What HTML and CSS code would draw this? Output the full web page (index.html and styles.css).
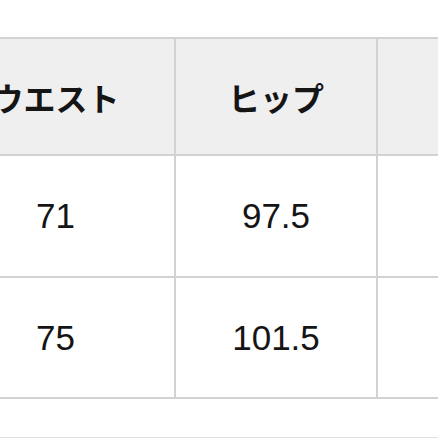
FILE: index.html
```html
<!DOCTYPE html>
<html lang="ja">
<head>
<meta charset="utf-8">
<title>サイズ表</title>
<link rel="stylesheet" href="styles.css">
</head>
<body>
<div class="page">
  <div class="size-table">
    <div class="cell head">ウエスト</div>
    <div class="cell head">ヒップ</div>
    <div class="cell head"></div>
    <div class="cell row1">71</div>
    <div class="cell row1">97.5</div>
    <div class="cell row1"></div>
    <div class="cell row2">75</div>
    <div class="cell row2">101.5</div>
    <div class="cell row2"></div>
  </div>
  <div class="next-rule"></div>
</div>
</body>
</html>
```
FILE: styles.css
```css
html, body {
  margin: 0;
  padding: 0;
  background: #ffffff;
}
.page {
  width: 438px;
  height: 438px;
  overflow: hidden;
  padding-top: 37px;
  box-sizing: border-box;
}
.size-table {
  display: grid;
  grid-template-columns: 239px 202px 240px;
  grid-template-rows: 117px 122px 121px;
  width: max-content;
  margin-left: -65px;
  border-top: 2px solid #d2d2d2;
  border-left: 2px solid #d2d2d2;
}
.cell {
  box-sizing: border-box;
  border-right: 2px solid #d2d2d2;
  border-bottom: 2px solid #d2d2d2;
  display: flex;
  align-items: center;
  justify-content: center;
  color: #151515;
}
.head {
  background: #efefef;
  font-family: "Noto Sans CJK JP", sans-serif;
  font-weight: 700;
  font-size: 32px;
}
.row1, .row2 {
  font-family: "Liberation Sans", Arial, sans-serif;
  font-size: 35px;
}
.next-rule {
  margin-top: 38px;
  margin-left: -65px;
  width: 700px;
  border-top: 2px solid #e0e0e0;
}
```
